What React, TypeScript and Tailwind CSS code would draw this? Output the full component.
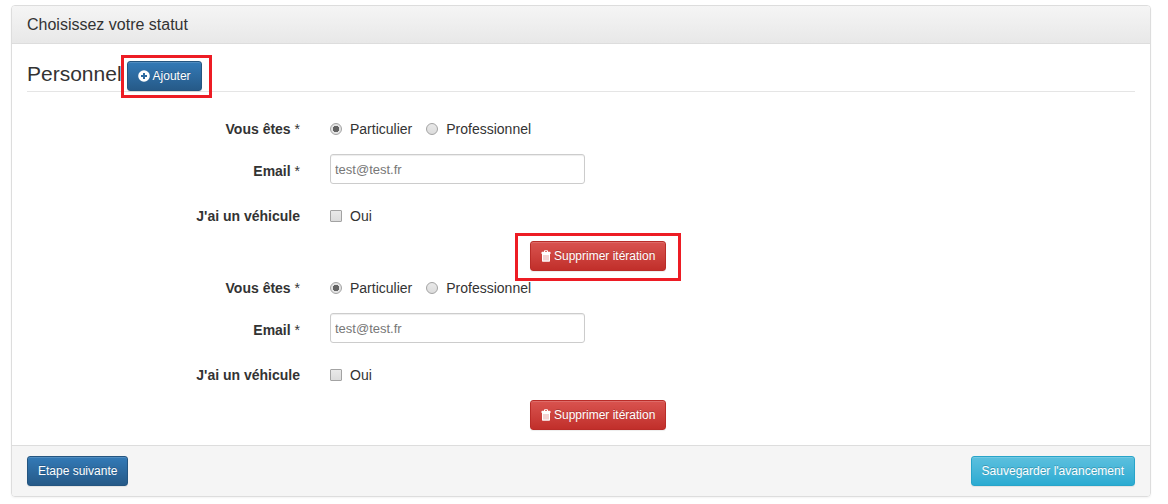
import { useState, type ButtonHTMLAttributes } from "react";
import clsx from "clsx";

type Tone = "primary" | "danger" | "info";

const tones: Record<Tone, string> = {
  primary: "border-[#245580] from-[#337ab7] to-[#265a88]",
  danger: "border-[#b92c28] from-[#d9534f] to-[#c12e2a]",
  info: "border-[#28a4c9] from-[#5bc0de] to-[#2aabd2]",
};

function Button({ tone, className, children, ...rest }: ButtonHTMLAttributes<HTMLButtonElement> & { tone: Tone }) {
  return (
    <button
      type="button"
      className={clsx(
        "inline-flex h-[30px] items-center gap-[3px] whitespace-nowrap rounded-[3px] border bg-linear-to-b px-[10px] text-[12px] leading-[18px] text-white",
        "shadow-[inset_0_1px_0_rgba(255,255,255,0.15),0_1px_1px_rgba(0,0,0,0.075)] [text-shadow:0_-1px_0_rgba(0,0,0,0.2)]",
        tones[tone],
        className,
      )}
      {...rest}
    >
      {children}
    </button>
  );
}

function PlusIcon() {
  return (
    <svg width="12" height="12" viewBox="0 0 12 12" aria-hidden="true">
      <path
        fill="currentColor"
        fillRule="evenodd"
        d="M6 0.2a5.8 5.8 0 1 1 0 11.6A5.8 5.8 0 0 1 6 .2ZM5 3v2H3v2h2v2h2V7h2V5H7V3H5Z"
      />
    </svg>
  );
}

function TrashIcon() {
  return (
    <svg width="10" height="12" viewBox="0 0 10 12" aria-hidden="true">
      <path
        fill="currentColor"
        fillRule="evenodd"
        d="M3 1c0-.5.4-.8.8-.8h2.4c.4 0 .8.3.8.8v.7h1.9c.3 0 .6.3.6.6V4h-9V2.300c0-.3.300-.6.6-.6H3V1Zm1 .1v.6h2v-.6H4ZM1 4h8v6.700c0 .6-.4 1-1 1H2c-.6 0-1-.4-1-1V4Z"
      />
      <path className="stroke-[#cc403c]/60" strokeWidth="0.8" d="M3 5v5.500M5 5v5.500M7 5v5.500" />
    </svg>
  );
}

const box =
  "size-3 shrink-0 appearance-none border border-[#a3a3a3] bg-linear-to-b from-[#e9e9e9] to-[#dcdcdc]";
const label = "w-[273px] shrink-0 text-right font-bold";
const radio = clsx(
  box,
  "rounded-full checked:bg-[radial-gradient(circle,#636363_0,#636363_3px,#e4e4e4_3.5px)]",
);

function Iteration({ index, marked }: { index: number; marked: boolean }) {
  const [status, setStatus] = useState("Particulier");
  return (
    <div className="flex flex-col">
      <fieldset className="flex gap-[30px]" aria-labelledby={`statut-${index}`}>
        <span id={`statut-${index}`} className={label}>
          Vous êtes <span className="font-normal">*</span>
        </span>
        <div className="flex gap-[14px]">
          {["Particulier", "Professionnel"].map((name) => (
            <label key={name} className="flex items-center gap-2">
              <input
                type="radio"
                name={`type-${index}`}
                checked={status === name}
                onChange={() => setStatus(name)}
                className={radio}
              />
              {name}
            </label>
          ))}
        </div>
      </fieldset>
      <div className="mt-[15px] flex gap-[30px]">
        <label htmlFor={`email-${index}`} className={clsx(label, "pt-[7px]")}>
          Email <span className="font-normal">*</span>
        </label>
        <input
          id={`email-${index}`}
          type="email"
          placeholder="test@test.fr"
          className="h-[30px] w-[255px] rounded-[3px] border border-[#ccc] bg-white px-1 text-[13px] shadow-[inset_0_1px_1px_rgba(0,0,0,0.075)] placeholder:text-[#777]"
        />
      </div>
      <div className="mt-[22px] flex gap-[30px]">
        <span className={label}>J'ai un véhicule</span>
        <label className="flex items-center gap-2">
          <input type="checkbox" className={clsx(box, "rounded-[1px] checked:bg-[#555]")} aria-label="J'ai un véhicule" />
          Oui
        </label>
      </div>
      <div className="mt-[15px] flex pl-[503px]">
        <div className="relative flex">
          <Button tone="danger">
            <TrashIcon />
            Supprimer itération
          </Button>
          {marked && (
            <span className="pointer-events-none absolute -top-2 -right-[15px] -bottom-[10px] -left-[15px] border-3 border-[#ed1c24]" />
          )}
        </div>
      </div>
    </div>
  );
}

export default function App() {
  return (
    <main className="bg-white pt-[5px] pr-[17px] pb-[7px] pl-[11px] font-['Liberation_Sans',Arial,sans-serif] text-[14px] leading-5 text-[#333]">
      <form className="rounded-[4px] border border-[#ddd] shadow-[0_1px_2px_rgba(0,0,0,0.05)]">
        <header className="rounded-t-[3px] border-b border-[#ddd] bg-linear-to-b from-[#f5f5f5] to-[#e8e8e8] px-[15px] py-[9px]">
          <h1 className="text-[16px] leading-[19px]">Choisissez votre statut</h1>
        </header>
        <section className="px-[15px] pt-[17px] pb-[15px]">
          <div className="flex items-start gap-[5px] border-b border-[#e5e5e5]">
            <h2 className="text-[21px] leading-[26px]">Personnel</h2>
            <div className="relative flex">
              <Button tone="primary">
                <PlusIcon />
                Ajouter
              </Button>
              <span className="pointer-events-none absolute -top-[6px] -right-[10px] -bottom-[7px] -left-[6px] border-3 border-[#ed1c24]" />
            </div>
          </div>
          <div className="mt-[27px] flex flex-col gap-[7px]">
            <Iteration index={1} marked />
            <Iteration index={2} marked={false} />
          </div>
        </section>
        <footer className="flex justify-between rounded-b-[3px] border-t border-[#ddd] bg-[#f5f5f5] px-[15px] py-[10px]">
          <Button tone="primary">Etape suivante</Button>
          <Button tone="info">Sauvegarder l'avancement</Button>
        </footer>
      </form>
    </main>
  );
}
